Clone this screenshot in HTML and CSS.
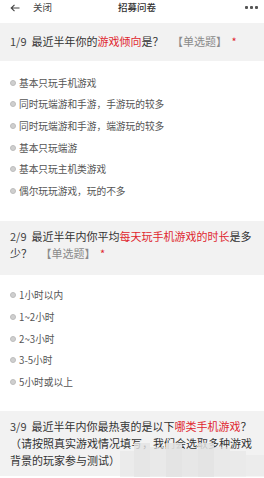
FILE: index.html
```html
<!DOCTYPE html>
<html lang="zh">
<head>
<meta charset="utf-8">
<link rel="stylesheet" href="styles.css">
</head>
<body>
<div class="page">
  <header class="topbar">
    <div class="left">
      <svg class="back" width="10" height="8" viewBox="0 0 10 8"><path d="M4.5 0.8 L1.2 4 L4.5 7.2 M1.2 4 H9.5" fill="none" stroke="#444" stroke-width="1.1"/></svg>
      <span class="close">关闭</span>
    </div>
    <div class="title">招募问卷</div>
    <div class="more"><i></i><i></i><i></i></div>
  </header>

  <section class="q q1">
    <p><span class="num">1/9</span>最近半年你的<span class="hl">游戏倾向</span>是？ <span class="tag">【单选题】</span> <span class="star">*</span></p>
  </section>
  <ul class="opts o1">
    <li><span class="radio"></span>基本只玩手机游戏</li>
    <li><span class="radio"></span>同时玩端游和手游，手游玩的较多</li>
    <li><span class="radio"></span>同时玩端游和手游，端游玩的较多</li>
    <li><span class="radio"></span>基本只玩端游</li>
    <li><span class="radio"></span>基本只玩主机类游戏</li>
    <li><span class="radio"></span>偶尔玩玩游戏，玩的不多</li>
  </ul>

  <section class="q q2">
    <p><span class="num">2/9</span>最近半年内你平均<span class="hl">每天玩手机游戏的时长</span>是多少？ <span class="tag">【单选题】</span> <span class="star">*</span></p>
  </section>
  <ul class="opts o2">
    <li><span class="radio"></span>1小时以内</li>
    <li><span class="radio"></span>1~2小时</li>
    <li><span class="radio"></span>2~3小时</li>
    <li><span class="radio"></span>3-5小时</li>
    <li><span class="radio"></span>5小时或以上</li>
  </ul>

  <section class="q q3">
    <p><span class="num">3/9</span>最近半年内你最热衷的是以下<span class="hl">哪类手机游戏</span>？（请按照真实游戏情况填写，我们会选取多种游戏背景的玩家参与测试）</p>
    <div class="mosaic">
      <i style="left:0;top:10px;width:14px;height:26px;opacity:.45"></i>
      <i style="left:14px;top:2px;width:16px;height:34px;opacity:.8"></i>
      <i style="left:30px;top:6px;width:16px;height:30px;opacity:.6"></i>
      <i style="left:46px;top:2px;width:16px;height:34px;opacity:.9"></i>
      <i style="left:62px;top:8px;width:16px;height:28px;opacity:.7"></i>
      <i style="left:78px;top:2px;width:16px;height:34px;opacity:.85"></i>
      <i style="left:94px;top:6px;width:16px;height:30px;opacity:.6"></i>
      <i style="left:110px;top:10px;width:16px;height:26px;opacity:.5"></i>
      <i style="left:126px;top:14px;width:18px;height:22px;opacity:.35"></i>
    </div>
  </section>
</div>
</body>
</html>
```

FILE: styles.css
```css
* { box-sizing: border-box; margin: 0; padding: 0; }
html, body { background: #fff; }
body {
  margin: 0;
  font-family: "Noto Sans CJK SC", "Liberation Sans", sans-serif;
  color: #333;
  width: 264px;
  height: 478px;
  overflow: hidden;
}
.page { width: 264px; }

.topbar {
  height: 23px;
  display: grid;
  grid-template-columns: 1fr auto 1fr;
  align-items: start;
  padding: 1px 6px 0 10px;
  font-size: 9.5px;
  line-height: 13px;
}
.left { display: flex; align-items: center; gap: 13px; height: 13px; }
.back { display: block; }
.close { color: #444; }
.title { color: #333; font-weight: 500; padding-left: 6px; }
.more { justify-self: end; display: flex; gap: 2px; padding: 5px 0 0 0; }
.more i { width: 3px; height: 3px; background: #555; display: block; border-radius: 1px; }

.q {
  background: #f2f2f2;
  padding: 11px 4px 0 10px;
  font-size: 11px;
  line-height: 17px;
  color: #333;
  position: relative;
}
.q1 { height: 38px; padding-top: 10px; }
.q2 { height: 54px; padding-top: 7px; margin-top: 19px; }
.q3 { height: 65px; padding-top: 7px; margin-top: 18px; }
.num { margin-right: 5px; color: #444; }
.hl { color: #e0262e; }
.tag { color: #8a8a8a; margin-left: 6px; }
.star { color: #e0262e; margin-left: 2px; }

.opts { list-style: none; padding: 11px 0 0 10px; }
.opts li {
  display: flex;
  align-items: center;
  height: 21.6px;
  font-size: 9.7px;
  color: #555;
}
.o2 { padding-top: 10px; }
.radio {
  width: 6px;
  height: 6px;
  border-radius: 50%;
  background: #cfcfcf;
  border: 1px solid #bdbdbd;
  margin-right: 3px;
  flex: none;
}

.mosaic {
  position: absolute;
  left: 120px;
  top: 30px;
  width: 144px;
  height: 40px;
}
.mosaic i {
  position: absolute;
  display: block;
  background: #e2e2e2;
}
```
